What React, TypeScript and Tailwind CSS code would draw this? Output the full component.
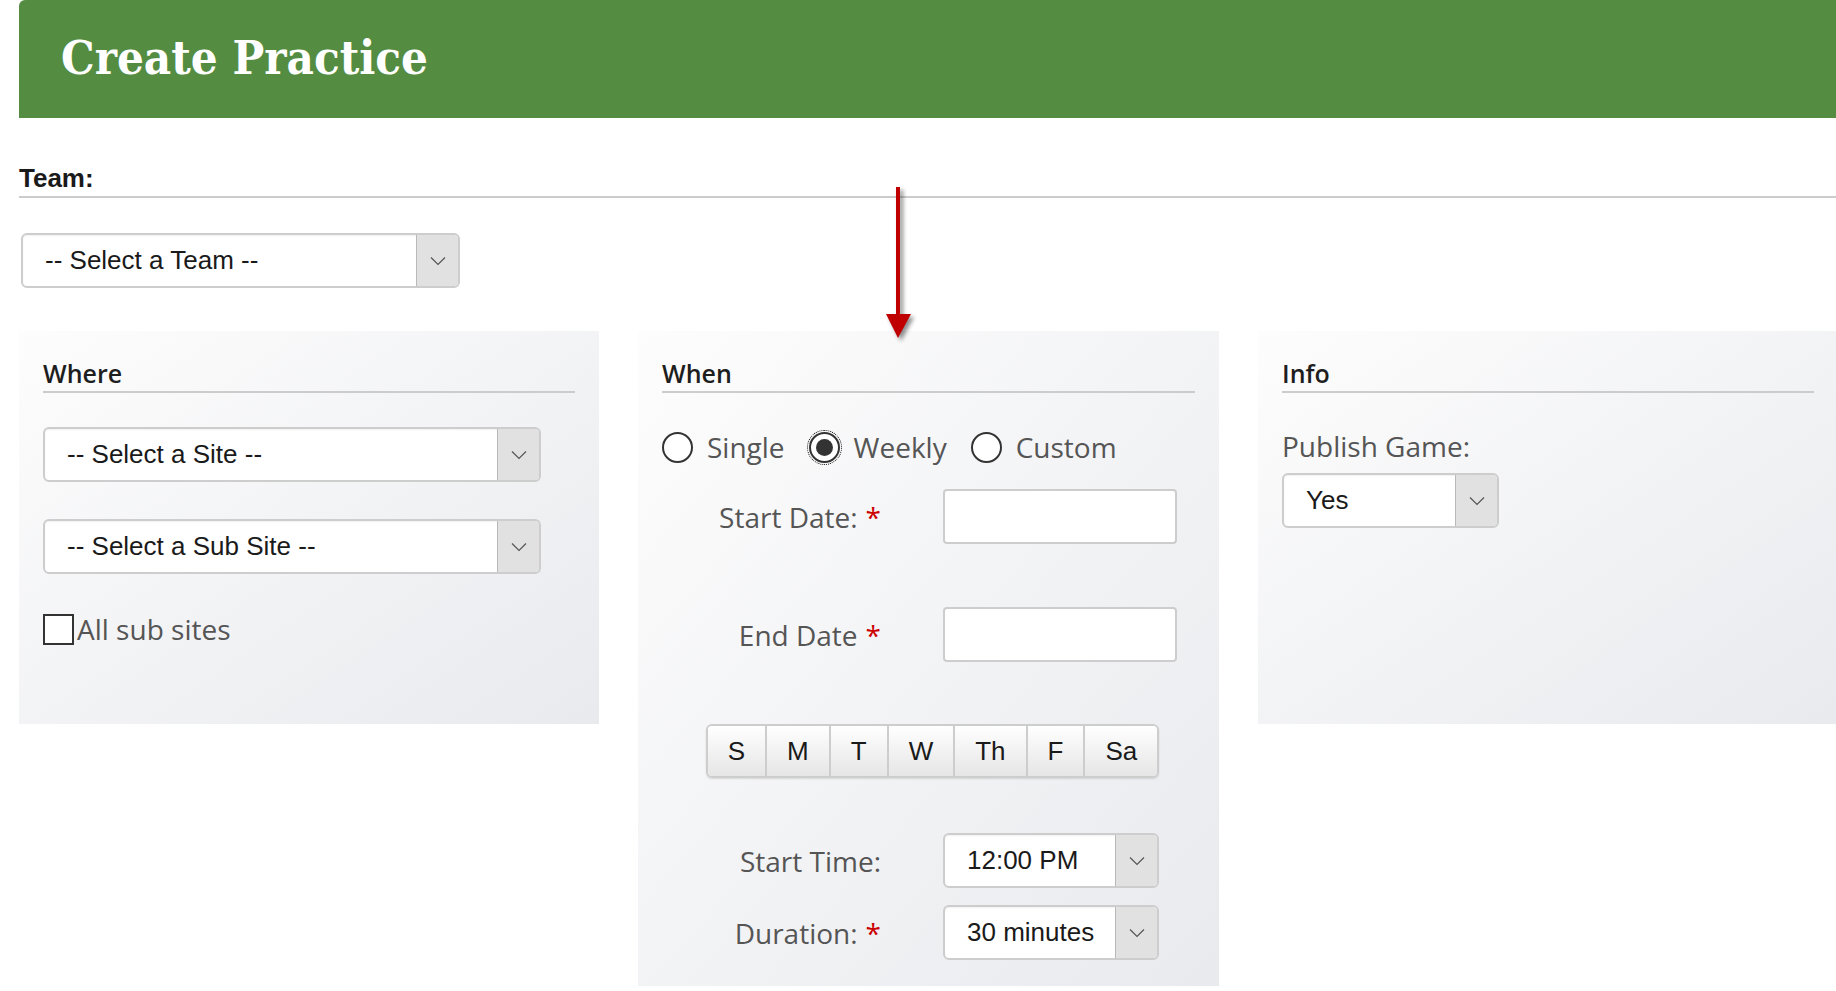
import clsx from "clsx";

const sans = "font-[family-name:'Liberation_Sans',Arial,sans-serif]";
const open = "font-[family-name:'Open_Sans',sans-serif]";

function Chevron() {
  return (
    <svg width="16" height="10" viewBox="0 0 16 10" fill="none">
      <polyline points="1,1.5 8,8.5 15,1.5" stroke="#555" strokeWidth="1.2" />
    </svg>
  );
}

function Select({ value, className }: { value: string; className?: string }) {
  return (
    <div
      className={clsx(
        "flex h-[55px] overflow-hidden rounded-[6px] border-2 border-[#cdcdcd] bg-white shadow-[inset_0_1px_2px_rgba(0,0,0,0.06)]",
        className
      )}
    >
      <div className={clsx("flex flex-1 items-center pl-[22px] text-[26px] text-[#1a1a1a]", sans)}>{value}</div>
      <div className="flex w-[42px] items-center justify-center border-l border-[#b9b9b9] bg-[#e1e1e1]">
        <Chevron />
      </div>
    </div>
  );
}

function Heading({ children }: { children: string }) {
  return (
    <div className={clsx("border-b-2 border-[#cccccc] pb-[2px] text-[25px] leading-[32px] font-semibold text-[#1e1e1e]", open)}>
      {children}
    </div>
  );
}

function Panel({ children, className }: { children: React.ReactNode; className?: string }) {
  return (
    <div className={clsx("bg-linear-to-br from-[#fdfdfd] to-[#e9eaee] px-[24px] pt-[26px]", className)}>{children}</div>
  );
}

function Radio({ label, checked }: { label: string; checked?: boolean }) {
  return (
    <label className="flex items-center gap-[14px]">
      <span
        className={clsx(
          "flex h-[31px] w-[31px] items-center justify-center rounded-full border-2 border-[#333] bg-white",
          checked && "outline-1 outline-dotted outline-[#111] outline-offset-[1px]"
        )}
      >
        {checked && <span className="h-[17px] w-[17px] rounded-full bg-[#333]" />}
      </span>
      <span className={clsx("text-[28px] text-[#555]", open)}>{label}</span>
    </label>
  );
}

function Row({ label, required, children, className }: { label: string; required?: boolean; children: React.ReactNode; className?: string }) {
  return (
    <div className={clsx("flex items-center", className)}>
      <div className={clsx("w-[219px] text-right text-[28px] text-[#555]", open)}>
        {label}
        {required && <span className="ml-[8px] text-[#cc0000]">*</span>}
      </div>
      <div className="ml-[62px]">{children}</div>
    </div>
  );
}

const days = ["S", "M", "T", "W", "Th", "F", "Sa"];

export default function App() {
  return (
    <div className="relative h-[991px] w-[1836px] overflow-hidden bg-white">
      <div className="ml-[19px]">
        <div className="flex h-[118px] items-center rounded-tl-[6px] bg-[#548d41] pb-[2px] pl-[42px]">
          <h1 className="font-[family-name:'DejaVu_Serif',serif] text-[47px] font-bold text-white [font-stretch:condensed]">
            Create Practice
          </h1>
        </div>

        <div className={clsx("flex h-[80px] items-end border-b-2 border-[#cccccc] pb-[3px] text-[26px] leading-[30px] font-bold text-[#1a1a1a]", sans)}>
          Team:
        </div>

        <Select value="-- Select a Team --" className="ml-[2px] mt-[35px] w-[439px]" />

        <div className="mt-[43px] grid grid-cols-[580px_581px_580px] items-start gap-[39px]">
          <Panel className="h-[393px]">
            <Heading>Where</Heading>
            <Select value="-- Select a Site --" className="mt-[34px] w-[498px]" />
            <Select value="-- Select a Sub Site --" className="mt-[37px] w-[498px]" />
            <label className="mt-[34px] flex items-center">
              <span className="h-[31px] w-[31px] border-2 border-[#333] bg-white" />
              <span className={clsx("ml-[3px] text-[28px] text-[#555]", open)}>All sub sites</span>
            </label>
          </Panel>

          <Panel className="h-[655px]">
            <Heading>When</Heading>
            <div className="mt-[36px] flex h-[36px] items-center gap-[24px]">
              <Radio label="Single" />
              <Radio label="Weekly" checked />
              <Radio label="Custom" />
            </div>
            <Row label="Start Date:" required className="mt-[24px]">
              <div className="h-[55px] w-[234px] rounded-[4px] border-2 border-[#cdcdcd] bg-white" />
            </Row>
            <Row label="End Date" required className="mt-[63px]">
              <div className="h-[55px] w-[234px] rounded-[4px] border-2 border-[#cdcdcd] bg-white" />
            </Row>
            <div className="mt-[62px] flex justify-center pl-[8px]">
              <div className="flex h-[54px] overflow-hidden rounded-[6px] border-2 border-[#cdcdcd] shadow-[0_1px_2px_rgba(0,0,0,0.12)]">
                {days.map((d, i) => (
                  <div
                    key={d}
                    className={clsx(
                      "flex items-center bg-linear-to-b from-white to-[#e6e6e6] px-[20px] text-[26px] text-[#1a1a1a]",
                      sans,
                      i > 0 && "border-l-2 border-[#cdcdcd]"
                    )}
                  >
                    {d}
                  </div>
                ))}
              </div>
            </div>
            <Row label="Start Time:" className="mt-[55px]">
              <Select value="12:00 PM" className="w-[216px]" />
            </Row>
            <Row label="Duration:" required className="mt-[17px]">
              <Select value="30 minutes" className="w-[216px]" />
            </Row>
          </Panel>

          <Panel className="h-[393px]">
            <Heading>Info</Heading>
            <div className={clsx("mt-[35px] text-[28px] leading-[36px] text-[#555]", open)}>Publish Game:</div>
            <Select value="Yes" className="mt-[9px] w-[217px]" />
          </Panel>
        </div>
      </div>

      {/* callout arrow over the When panel */}
      <svg
        className="absolute left-[880px] top-[180px] drop-shadow-[3px_3px_2px_rgba(0,0,0,0.45)]"
        width="40"
        height="170"
        viewBox="0 0 40 170"
      >
        <line x1="18" y1="7" x2="18" y2="138" stroke="#c00000" strokeWidth="4" />
        <polygon points="6,134 31,134 18,158" fill="#c00000" />
      </svg>
    </div>
  );
}
